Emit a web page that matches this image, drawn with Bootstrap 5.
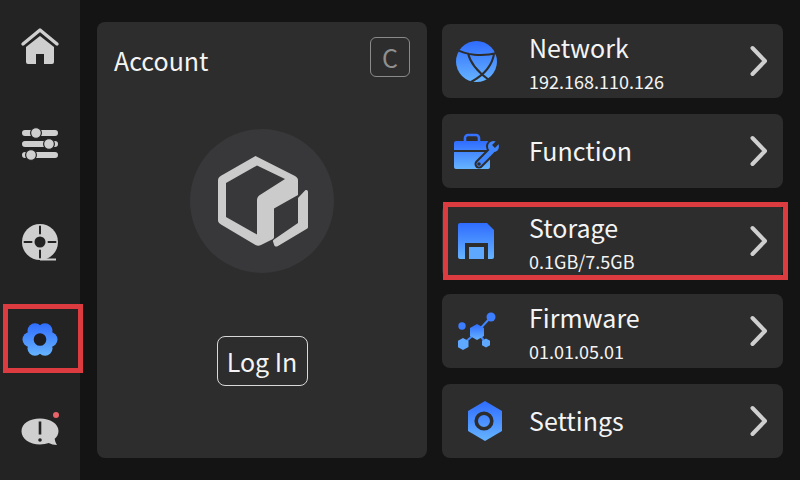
<!DOCTYPE html>
<html lang="en">
  <head>
    <meta charset="UTF-8" />
    <title>Account</title>
    <link href="https://cdn.jsdelivr.net/npm/bootstrap@5.3.3/dist/css/bootstrap.min.css" rel="stylesheet" />
    <style>
      html, body { height: 100%; overflow: hidden; }
      body { background: #141414; color: #f4f4f4; font-family: "Noto Sans CJK SC", "Noto Sans", sans-serif; }
      .screen { width: 800px; height: 480px; }
      .side-rail { width: 80px; background: #232323; padding: 22px 0 19px; }
      .rail-btn { width: 80px; height: 50px; }
      .main-area { padding: 22px 17px 22px 17px; gap: 15px; }
      .account-panel { width: 330px; background: #2d2d2d; border-radius: 8px; padding: 0 17px; }
      .account-title { font-size: 25px; line-height: 36px; margin-top: 20px; }
      .code-btn { width: 40px; height: 40px; margin-top: 15px; border: 1px solid #8a8a8a; border-radius: 6px; color: #8f8f8f; font-size: 25px; line-height: 1; }
      .avatar-disc { width: 144px; height: 144px; background: #38383b; margin-top: 51px; }
      .login-btn { width: 91px; height: 50px; margin-top: 63px; border: 1px solid #d8d8d8; border-radius: 8px; font-size: 25px; line-height: 1; color: #f4f4f4; }
      .menu-col { width: 341px; gap: 16px; padding-top: 2px; }
      .menu-row { height: 74px; background: #2d2d2d; border-radius: 8px; }
      .menu-icon { width: 87px; padding-left: 12px; }
      .menu-label { font-size: 25px; line-height: 34px; }
      .menu-solo { margin-bottom: 2px; }
      .menu-text { align-self: flex-start; padding-top: 6px; }
      .menu-sub { font-size: 18px; line-height: 28px; margin-top: 3px; }
      .chev { margin-right: 15px; }
      .icon-inset { margin-left: 4px; }
      .icon-hex { margin-left: 13px; }
      .icon-avatar { margin-left: 1px; }
      .mark-box { position: absolute; border: 5px solid #dc3c40; pointer-events: none; }
      .mark-side { left: 3px; top: 304px; width: 80px; height: 69px; }
      .mark-store { left: 443px; top: 202px; width: 345px; height: 78px; }
      .alert-dot { position: absolute; left: 53px; top: 1px; width: 6px; height: 6px; border-radius: 50%; background: #e8626a; }
      .alert-icon { margin-bottom: 8px; }
    </style>
  </head>
  <body>
    <svg width="0" height="0" class="position-absolute">
      <defs>
        <linearGradient id="blueFade" x1="0" y1="0" x2="0" y2="1">
          <stop offset="0" stop-color="#2f6cff" />
          <stop offset="1" stop-color="#66b4ff" />
        </linearGradient>
        <linearGradient id="gearFade" gradientUnits="userSpaceOnUse" x1="0" y1="4" x2="0" y2="37">
          <stop offset="0" stop-color="#2f6cff" />
          <stop offset="1" stop-color="#66b4ff" />
        </linearGradient>
      </defs>
    </svg>
    <div class="screen d-flex position-relative">
      <div class="side-rail d-flex flex-column justify-content-between align-items-center flex-shrink-0">
        <div class="rail-btn d-flex align-items-center justify-content-center">
          <svg width="40" height="40" viewBox="0 0 40 40">
            <path d="M6 20 20 9l14 11v15a2 2 0 0 1-2 2h-8V27h-8v10H8a2 2 0 0 1-2-2z" fill="#cfcfcf" />
            <path d="M3 17 20 3l17 14" fill="none" stroke="#cfcfcf" stroke-width="3.4" stroke-linecap="round" stroke-linejoin="round" />
          </svg>
        </div>
        <div class="rail-btn d-flex align-items-center justify-content-center">
          <svg width="40" height="36" viewBox="0 0 40 36">
            <path d="M5 7h30M5 18h30M5 29h30" stroke="#cfcfcf" stroke-width="6" stroke-linecap="round" />
            <g fill="#cfcfcf" stroke="#232323" stroke-width="1.2">
              <circle cx="16" cy="7" r="5.4" />
              <circle cx="29" cy="18" r="5.4" />
              <circle cx="11" cy="29" r="5.4" />
            </g>
          </svg>
        </div>
        <div class="rail-btn d-flex align-items-center justify-content-center">
          <svg width="40" height="40" viewBox="0 0 40 40">
            <circle cx="20" cy="20" r="18" fill="#cfcfcf" />
            <path d="M20 37.500h16" stroke="#cfcfcf" stroke-width="2" />
            <circle cx="20" cy="20" r="5.500" fill="#232323" />
            <path d="M20 4.500v7M20 28.500v7M4.500 20h7M28.500 20h7" stroke="#232323" stroke-width="2" stroke-linecap="round" />
          </svg>
        </div>
        <div class="rail-btn d-flex align-items-center justify-content-center">
          <svg width="40" height="40" viewBox="0 0 40 40">
            <g fill="url(#gearFade)">
              <circle cx="30" cy="20.500" r="7.500" />
              <circle cx="25" cy="29.200" r="7.500" />
              <circle cx="15" cy="29.200" r="7.500" />
              <circle cx="10" cy="20.500" r="7.500" />
              <circle cx="15" cy="11.800" r="7.500" />
              <circle cx="25" cy="11.800" r="7.500" />
              <circle cx="20" cy="20.500" r="10" />
            </g>
            <circle cx="20" cy="20.500" r="6.300" fill="#1d1d22" />
          </svg>
        </div>
        <div class="rail-btn d-flex align-items-center justify-content-center position-relative">
          <span class="alert-dot"></span>
          <svg class="alert-icon" width="40" height="30" viewBox="0 0 40 30">
            <path d="M20 1.500c10 0 18.500 5 18.500 12.500 0 3.300-1.500 5.800-3.800 7.800.3 2.400 1 4.400 2.300 6.200-3.200 0-5.900-.7-8.200-2-2.600.9-5.600 1.400-8.800 1.400C9.500 27.400 1.500 22 1.500 14.200 1.500 6.500 9.500 1.500 20 1.500z" fill="#cfcfcf" />
            <path d="M20 4.500v13" stroke="#232323" stroke-width="2.600" />
            <circle cx="20" cy="23" r="1.800" fill="#232323" />
          </svg>
        </div>
      </div>

      <div class="main-area d-flex flex-grow-1">
        <div class="account-panel d-flex flex-column flex-shrink-0">
          <div class="d-flex justify-content-between align-items-start">
            <div class="account-title">Account</div>
            <div class="code-btn d-flex align-items-center justify-content-center">C</div>
          </div>
          <div class="avatar-disc rounded-circle d-flex align-items-center justify-content-center align-self-center">
            <svg class="icon-avatar" width="90" height="92" viewBox="0 0 90 92">
              <path fill="#cbcbcb" fill-rule="evenodd" d="M37.500 1 77 21c2 1.200 3 2.400 3 4.500V40L56 53.500V82c0 1-.5 1.700-1.500 2.200L43 90c-2 1-3.500 1-5.500 0L3 69.500c-2-1.200-3-2.500-3-4.500V25.500c0-2.200 1-3.500 3-4.700L37.500 1zM39 10.500 8 28v34l31 17.500V45c0-2 .8-3.500 2.500-4.800L67 24z" />
              <path fill="#cbcbcb" d="M87 35.500c1.500-1 3-.4 3 1.500v35c0 1-.5 1.500-1.500 2L60 91c-2 1.200-3.500.5-4-1.500L55 86.500c-.3-1 .2-1.500 1-2L80 68V43z" />
            </svg>
          </div>
          <button type="button" class="btn login-btn p-0 align-self-center d-flex align-items-center justify-content-center">Log In</button>
        </div>

        <div class="menu-col d-flex flex-column flex-shrink-0">
          <div class="menu-row d-flex align-items-center">
            <div class="menu-icon">
              <svg width="44" height="41" viewBox="-2 0 44 41">
                <circle cx="20.500" cy="20.500" r="20.500" fill="url(#blueFade)" />
                <path d="M0 8C9 14 26 16 41 12M12 12C14 22 22 31 33 39M38 13C36 25 28 34 15 41" fill="none" stroke="#2d2d2d" stroke-width="2" />
              </svg>
            </div>
            <div class="menu-text flex-grow-1">
              <div class="menu-label">Network</div>
              <div class="menu-sub">192.168.110.126</div>
            </div>
            <svg class="chev" width="18" height="32" viewBox="0 0 18 32"><path d="M2.500 3l12.500 13L2.500 29" fill="none" stroke="#cfcfcf" stroke-width="4" stroke-linecap="round" stroke-linejoin="round" /></svg>
          </div>
          <div class="menu-row d-flex align-items-center">
            <div class="menu-icon">
              <svg width="46" height="36" viewBox="0 0 46 36">
                <path d="M11 8V5a3 3 0 0 1 3-3h8a3 3 0 0 1 3 3v3" fill="none" stroke="#3572ff" stroke-width="2.600" />
                <path fill="url(#blueFade)" d="M2 8h32a2 2 0 0 1 2 2v7H0v-7a2 2 0 0 1 2-2zM0 19h36v15a2 2 0 0 1-2 2H2a2 2 0 0 1-2-2z" />
                <path d="M25 31 38 18" stroke="#2d2d2d" stroke-width="9" stroke-linecap="round" />
                <circle cx="39.500" cy="13.500" r="7.500" fill="#2d2d2d" />
                <path d="M25 31 38 18" stroke="#3f86ff" stroke-width="5" stroke-linecap="round" />
                <circle cx="39.500" cy="13.500" r="5.500" fill="#3f86ff" />
                <path d="M39.500 13.500 45 8" stroke="#2d2d2d" stroke-width="4" />
                <circle cx="25" cy="31" r="1.800" fill="#2d2d2d" />
              </svg>
            </div>
            <div class="menu-label menu-solo flex-grow-1">Function</div>
            <svg class="chev" width="18" height="32" viewBox="0 0 18 32"><path d="M2.500 3l12.500 13L2.500 29" fill="none" stroke="#cfcfcf" stroke-width="4" stroke-linecap="round" stroke-linejoin="round" /></svg>
          </div>
          <div class="menu-row d-flex align-items-center">
            <div class="menu-icon">
              <svg class="icon-inset" width="36" height="36" viewBox="0 0 36 36">
                <path fill="url(#blueFade)" d="M2 0h27l7 7v27a2 2 0 0 1-2 2h-4V20H7v16H2a2 2 0 0 1-2-2V2a2 2 0 0 1 2-2z" />
                <rect x="11" y="24" width="15" height="12" fill="#5ea8ff" />
              </svg>
            </div>
            <div class="menu-text flex-grow-1">
              <div class="menu-label">Storage</div>
              <div class="menu-sub">0.1GB/7.5GB</div>
            </div>
            <svg class="chev" width="18" height="32" viewBox="0 0 18 32"><path d="M2.500 3l12.500 13L2.500 29" fill="none" stroke="#cfcfcf" stroke-width="4" stroke-linecap="round" stroke-linejoin="round" /></svg>
          </div>
          <div class="menu-row d-flex align-items-center">
            <div class="menu-icon">
              <svg class="icon-inset" width="40" height="40" viewBox="0 0 40 40">
                <path d="M19 21 33 6M19 21 5 33M19 21l9 11" stroke="#3f86ff" stroke-width="2" />
                <circle cx="33" cy="6" r="4.500" fill="#3d7dff" />
                <circle cx="4" cy="15" r="3.700" fill="#3d7dff" />
                <path d="M19 13l7 4v8l-7 4-7-4v-8z" fill="url(#blueFade)" />
                <path d="M5 27l5.500 3v6L5 39l-5.500-3v-6z" fill="#5ea8ff" />
                <path d="M28 27.500l4 2.300v4.500L28 36.500l-4-2.200v-4.500z" fill="#5ea8ff" />
              </svg>
            </div>
            <div class="menu-text flex-grow-1">
              <div class="menu-label">Firmware</div>
              <div class="menu-sub">01.01.05.01</div>
            </div>
            <svg class="chev" width="18" height="32" viewBox="0 0 18 32"><path d="M2.500 3l12.500 13L2.500 29" fill="none" stroke="#cfcfcf" stroke-width="4" stroke-linecap="round" stroke-linejoin="round" /></svg>
          </div>
          <div class="menu-row d-flex align-items-center">
            <div class="menu-icon">
              <svg class="icon-hex" width="36" height="40" viewBox="0 0 36 40">
                <path d="M18 0l17 10v20L18 40 1 30V10z" fill="url(#blueFade)" />
                <circle cx="17" cy="20" r="7.800" fill="none" stroke="#2d2d2d" stroke-width="3.600" />
              </svg>
            </div>
            <div class="menu-label menu-solo flex-grow-1">Settings</div>
            <svg class="chev" width="18" height="32" viewBox="0 0 18 32"><path d="M2.500 3l12.500 13L2.500 29" fill="none" stroke="#cfcfcf" stroke-width="4" stroke-linecap="round" stroke-linejoin="round" /></svg>
          </div>
        </div>
      </div>
      <div class="mark-box mark-side"></div>
      <div class="mark-box mark-store"></div>
    </div>
    <script src="https://cdn.jsdelivr.net/npm/bootstrap@5.3.3/dist/js/bootstrap.bundle.min.js"></script>
  </body>
</html>
